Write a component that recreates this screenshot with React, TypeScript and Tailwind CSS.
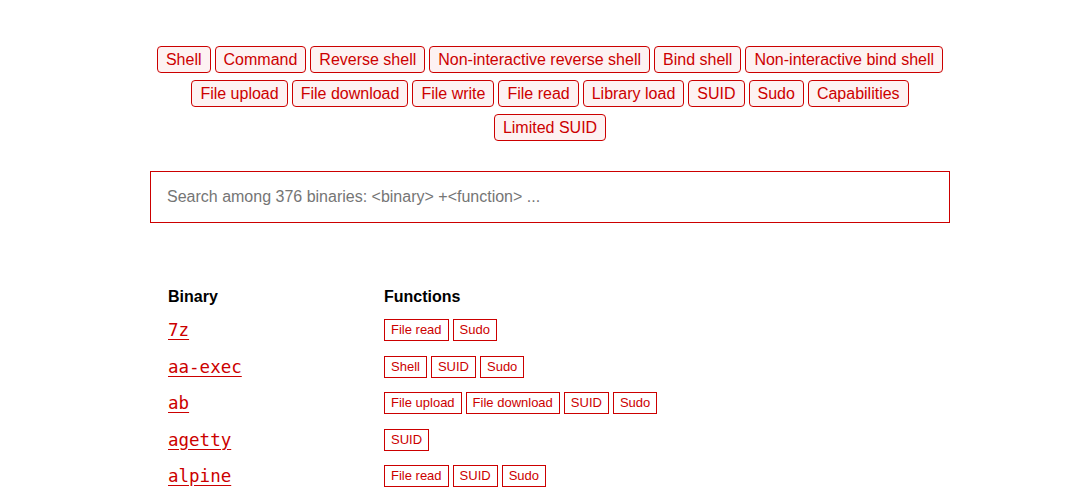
const filters = [
  "Shell",
  "Command",
  "Reverse shell",
  "Non-interactive reverse shell",
  "Bind shell",
  "Non-interactive bind shell",
  "File upload",
  "File download",
  "File write",
  "File read",
  "Library load",
  "SUID",
  "Sudo",
  "Capabilities",
  "Limited SUID",
];

const rows: { name: string; functions: string[] }[] = [
  { name: "7z", functions: ["File read", "Sudo"] },
  { name: "aa-exec", functions: ["Shell", "SUID", "Sudo"] },
  { name: "ab", functions: ["File upload", "File download", "SUID", "Sudo"] },
  { name: "agetty", functions: ["SUID"] },
  { name: "alpine", functions: ["File read", "SUID", "Sudo"] },
];

export default function App() {
  return (
    <div className="min-h-[492px] bg-white font-['Liberation_Sans',Arial,sans-serif] text-black">
      <div className="ml-[150px] w-[800px] pt-[46px]">
        {/* Function filters */}
        <div className="mx-auto flex w-[790px] flex-wrap justify-center gap-x-1 gap-y-[7px]">
          {filters.map((f) => (
            <button
              key={f}
              className="rounded-[4px] border border-[#cc0000] bg-[#fdf2f2] px-2 py-[3px] text-[16px] leading-[19px] text-[#cc0000]"
            >
              {f}
            </button>
          ))}
        </div>

        {/* Search */}
        <div className="mt-[30px] flex h-[52px] items-center border border-[#cc0000] px-4">
          <input
            className="w-full bg-transparent text-[16px] text-[#333] outline-none placeholder:text-[#757575]"
            placeholder="Search among 376 binaries: <binary> +<function> ..."
          />
        </div>

        {/* Binaries table */}
        <div className="mt-[59px] px-[18px]">
          <div className="flex h-[30px] items-center text-[16px] font-bold">
            <div className="w-[216px]">Binary</div>
            <div>Functions</div>
          </div>
          {rows.map((r) => (
            <div key={r.name} className="flex h-[36.5px] items-center">
              <div className="w-[216px]">
                <a
                  href="#"
                  className="font-['DejaVu_Sans_Mono',monospace] text-[17.5px] text-[#cc0000] underline underline-offset-[3px]"
                >
                  {r.name}
                </a>
              </div>
              <div className="flex gap-1">
                {r.functions.map((fn) => (
                  <span
                    key={fn}
                    className="border border-[#cc0000] px-[6px] py-[2px] text-[13px] leading-[16px] text-[#cc0000]"
                  >
                    {fn}
                  </span>
                ))}
              </div>
            </div>
          ))}
        </div>
      </div>
    </div>
  );
}
